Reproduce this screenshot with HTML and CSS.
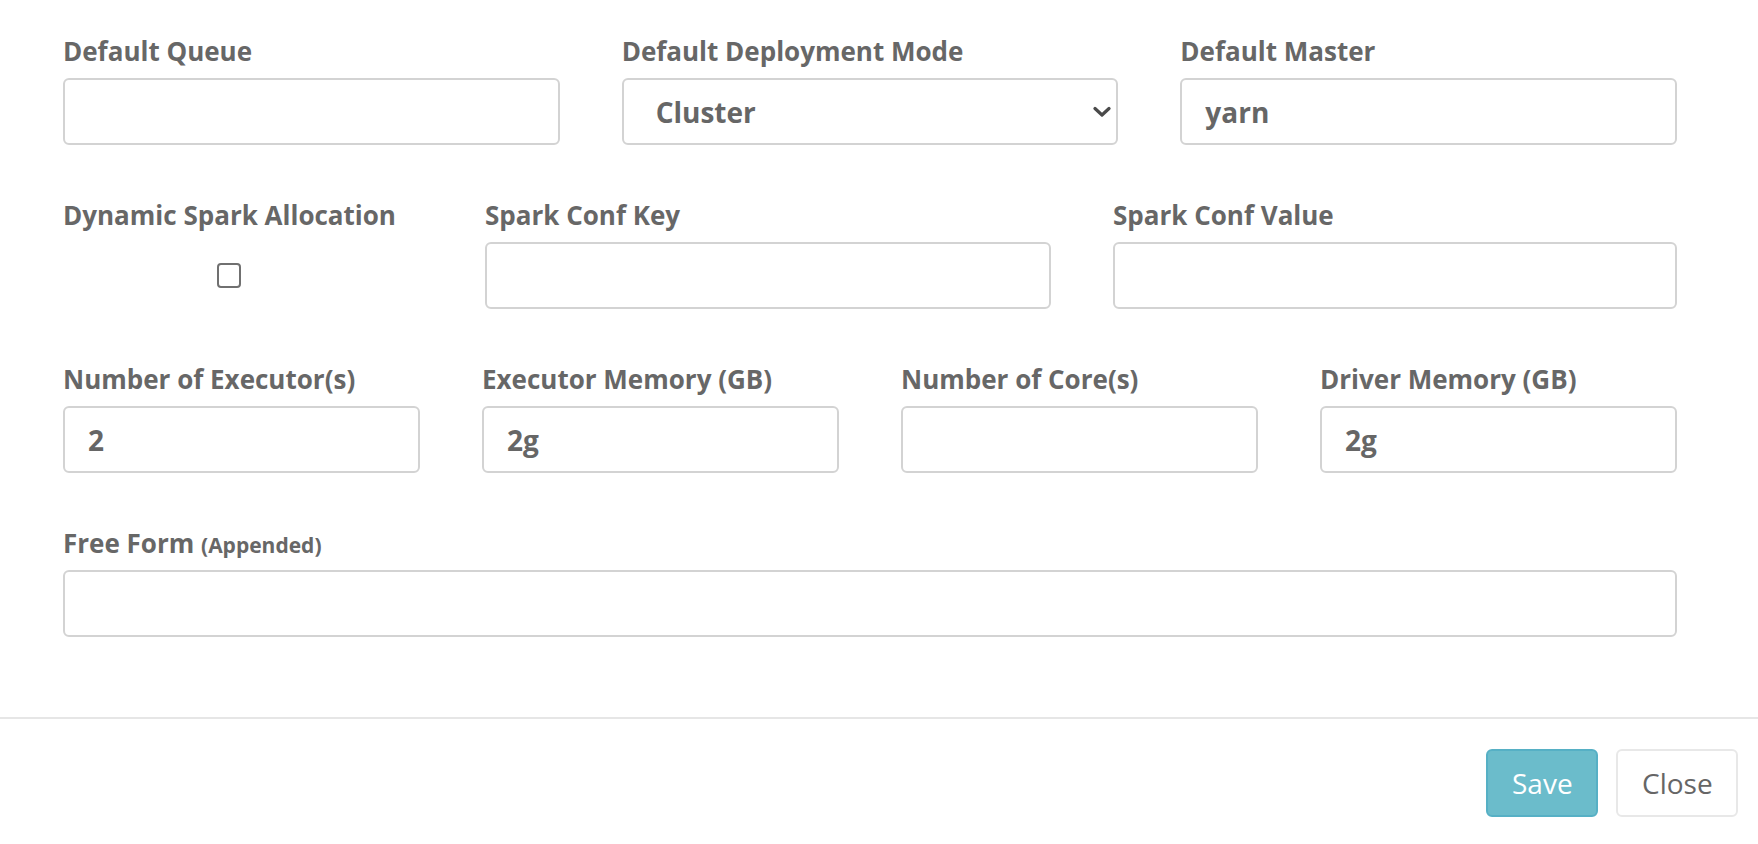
FILE: index.html
```html
<!DOCTYPE html>
<html lang="en">
<head>
<meta charset="utf-8">
<title>Spark Settings</title>
<link rel="stylesheet" href="styles.css">
</head>
<body>
<div class="modal">
  <form class="modal-body">
    <div class="row row-3">
      <div class="field">
        <label class="label">Default Queue</label>
        <input class="input" type="text" value="">
      </div>
      <div class="field">
        <label class="label">Default Deployment Mode</label>
        <div class="select-wrap">
          <select class="input select">
            <option>Cluster</option>
            <option>Client</option>
          </select>
          <svg class="chevron" width="18" height="12" viewBox="0 0 18 12"><path d="M2 2.5 L9 9 L16 2.5" fill="none" stroke="#4a4a4a" stroke-width="3.2" stroke-linecap="round" stroke-linejoin="round"/></svg>
        </div>
      </div>
      <div class="field">
        <label class="label">Default Master</label>
        <input class="input" type="text" value="yarn">
      </div>
    </div>

    <div class="row row-conf">
      <div class="field field-check">
        <div class="check-group">
          <label class="label">Dynamic Spark Allocation</label>
          <div class="check-box-wrap"><input class="checkbox" type="checkbox"></div>
        </div>
      </div>
      <div class="field">
        <label class="label">Spark Conf Key</label>
        <input class="input" type="text" value="">
      </div>
      <div class="field">
        <label class="label">Spark Conf Value</label>
        <input class="input" type="text" value="">
      </div>
    </div>

    <div class="row row-4">
      <div class="field">
        <label class="label">Number of Executor(s)</label>
        <input class="input" type="text" value="2">
      </div>
      <div class="field">
        <label class="label">Executor Memory (GB)</label>
        <input class="input" type="text" value="2g">
      </div>
      <div class="field">
        <label class="label">Number of Core(s)</label>
        <input class="input" type="text" value="">
      </div>
      <div class="field">
        <label class="label">Driver Memory (GB)</label>
        <input class="input" type="text" value="2g">
      </div>
    </div>

    <div class="row row-1">
      <div class="field">
        <label class="label">Free Form <small class="label-small">(Appended)</small></label>
        <input class="input" type="text" value="">
      </div>
    </div>
  </form>
  <div class="modal-footer">
    <button class="btn btn-save" type="button">Save</button>
    <button class="btn btn-close" type="button">Close</button>
  </div>
</div>
</body>
</html>
```

FILE: styles.css
```css
* { box-sizing: border-box; }

html, body {
  margin: 0;
  padding: 0;
  background: #ffffff;
  font-family: "Open Sans", "Liberation Sans", sans-serif;
  color: #666666;
}

.modal {
  width: 100%;
}

.modal-body {
  padding: 34px 81px 27px 63px;
  margin: 0;
}

.row {
  display: grid;
  column-gap: 62px;
  margin-bottom: 53px;
}

.row-3 { grid-template-columns: repeat(3, 1fr); }
.row-conf { grid-template-columns: 360fr 566fr 564fr; }
.row-4 { grid-template-columns: repeat(4, 1fr); }
.row-1 { grid-template-columns: 1fr; }

.field {
  display: flex;
  flex-direction: column;
  min-width: 0;
}

.label {
  display: block;
  height: 34px;
  font-size: 26px;
  line-height: 34px;
  font-weight: 700;
  color: #676767;
  margin-bottom: 10px;
  white-space: nowrap;
}

.label-small {
  font-size: 21px;
  line-height: 20px;
  font-weight: 700;
}

.input {
  display: block;
  width: 100%;
  height: 67px;
  border: 2px solid #d3d3d3;
  border-radius: 6px;
  background: #ffffff;
  padding: 0 23px;
  font-family: "Open Sans", "Liberation Sans", sans-serif;
  font-size: 28px;
  font-weight: 700;
  color: #666666;
  outline: none;
}

.select-wrap {
  position: relative;
}

.select {
  -webkit-appearance: none;
  appearance: none;
  padding-left: 32px;
  padding-right: 40px;
}

.chevron {
  position: absolute;
  right: 7px;
  top: 28px;
  pointer-events: none;
}

.field-check {
  align-items: flex-start;
}

.check-group {
  display: flex;
  flex-direction: column;
  align-items: center;
}

.check-box-wrap {
  height: 67px;
  display: flex;
  align-items: center;
  justify-content: center;
}

.checkbox {
  -webkit-appearance: none;
  appearance: none;
  width: 24px;
  height: 25px;
  margin: 0;
  border: 2px solid #707070;
  border-radius: 4px;
  background: #ffffff;
}

.modal-footer {
  border-top: 2px solid #e6e6e6;
  padding: 30px 20px 26px 0;
  display: flex;
  justify-content: flex-end;
  gap: 18px;
}

.btn {
  height: 68px;
  padding: 0 24px;
  border-radius: 6px;
  font-family: "Open Sans", "Liberation Sans", sans-serif;
  font-size: 28px;
  font-weight: 400;
  cursor: pointer;
}

.btn-save {
  width: 112px;
  background: #6bbccb;
  border: 2px solid #56b0c5;
  color: #ffffff;
}

.btn-close {
  width: 122px;
  background: #ffffff;
  border: 2px solid #e8e8e8;
  color: #666666;
}
```
